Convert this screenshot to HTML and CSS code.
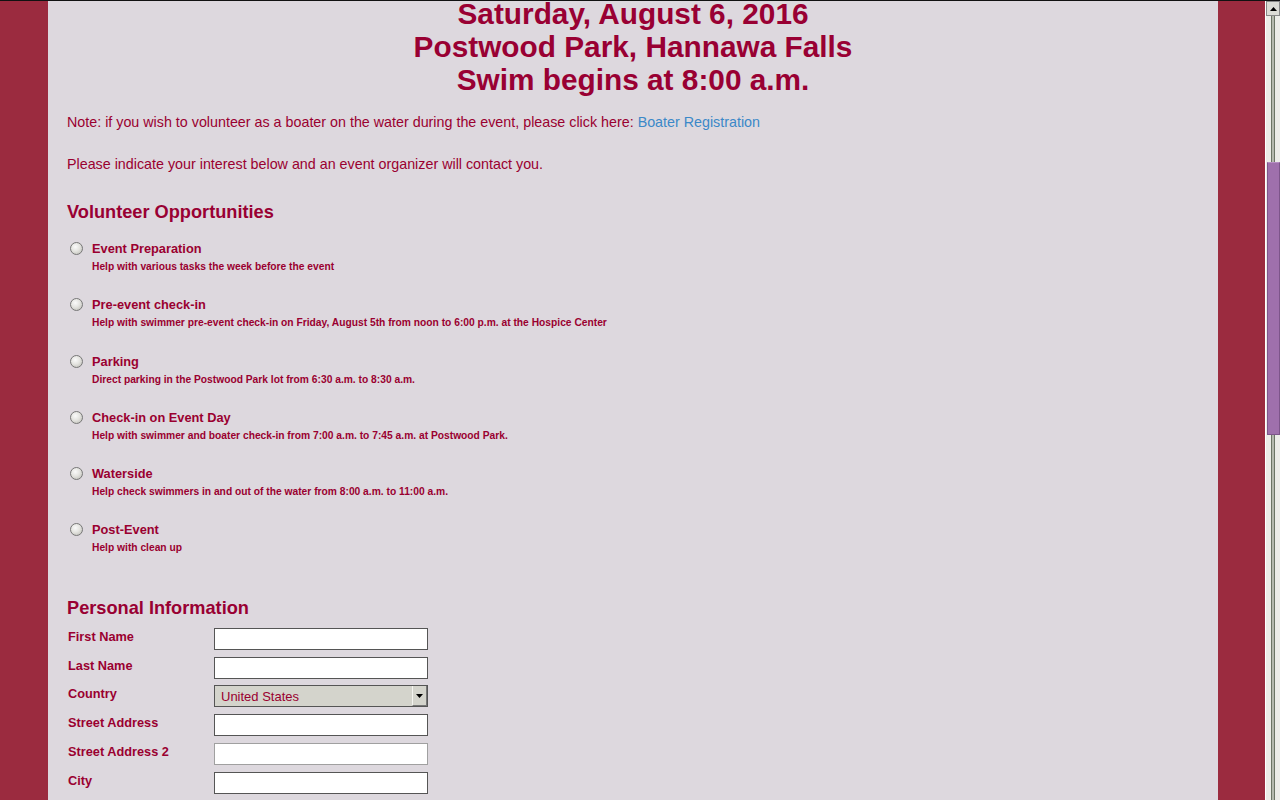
FILE: index.html
```html
<!DOCTYPE html>
<html>
<head>
<meta charset="utf-8">
<link rel="stylesheet" href="styles.css">
</head>
<body>
<div class="frame">
  <div class="page">
    <main class="content">
      <h1 class="title">Saturday, August 6, 2016<br>Postwood Park, Hannawa Falls<br>Swim begins at 8:00 a.m.</h1>
      <p class="para">Note: if you wish to volunteer as a boater on the water during the event, please click here: <a class="link" href="#">Boater Registration</a></p>
      <p class="para">Please indicate your interest below and an event organizer will contact you.</p>
      <h2 class="section">Volunteer Opportunities</h2>
      <ul class="opts">
        <li class="opt"><span class="radio"></span><div><div class="opt-name">Event Preparation</div><div class="opt-desc">Help with various tasks the week before the event</div></div></li>
        <li class="opt"><span class="radio"></span><div><div class="opt-name">Pre-event check-in</div><div class="opt-desc">Help with swimmer pre-event check-in on Friday, August 5th from noon to 6:00 p.m. at the Hospice Center</div></div></li>
        <li class="opt"><span class="radio"></span><div><div class="opt-name">Parking</div><div class="opt-desc">Direct parking in the Postwood Park lot from 6:30 a.m. to 8:30 a.m.</div></div></li>
        <li class="opt"><span class="radio"></span><div><div class="opt-name">Check-in on Event Day</div><div class="opt-desc">Help with swimmer and boater check-in from 7:00 a.m. to 7:45 a.m. at Postwood Park.</div></div></li>
        <li class="opt"><span class="radio"></span><div><div class="opt-name">Waterside</div><div class="opt-desc">Help check swimmers in and out of the water from 8:00 a.m. to 11:00 a.m.</div></div></li>
        <li class="opt"><span class="radio"></span><div><div class="opt-name">Post-Event</div><div class="opt-desc">Help with clean up</div></div></li>
      </ul>
      <h2 class="section section-pi">Personal Information</h2>
      <div class="form">
        <div class="row"><span class="lbl">First Name</span><span class="field"></span></div>
        <div class="row"><span class="lbl">Last Name</span><span class="field"></span></div>
        <div class="row"><span class="lbl">Country</span><span class="field select"><span class="sel-text">United States</span><span class="sel-btn"><svg width="7" height="4" viewBox="0 0 7 4"><path d="M0 0H7L3.5 4Z" fill="#000"/></svg></span></span></div>
        <div class="row"><span class="lbl">Street Address</span><span class="field"></span></div>
        <div class="row"><span class="lbl">Street Address 2</span><span class="field light"></span></div>
        <div class="row"><span class="lbl">City</span><span class="field"></span></div>
      </div>
    </main>
  </div>
  <div class="scrollbar">
    <div class="sb-btn"><svg width="7" height="4" viewBox="0 0 7 4"><path d="M0 4H7L3.5 0Z" fill="#000"/></svg></div>
    <div class="sb-track">
      <div class="sb-groove g1"></div>
      <div class="sb-thumb"></div>
      <div class="sb-groove g2"></div>
    </div>
  </div>
</div>
</body>
</html>
```

FILE: styles.css
```css
html, body {
  margin: 0;
  padding: 0;
  height: 100%;
  overflow: hidden;
}
body {
  font-family: "Liberation Sans", Arial, sans-serif;
  color: #9a0030;
  background: #9b2b3f;
}
.frame {
  display: flex;
  height: 800px;
  border-top: 1px solid #111;
  box-sizing: border-box;
}
.page {
  flex: 1;
  background: #9b2b3f;
  padding-left: 48px;
  padding-right: 47px;
  overflow: hidden;
}
.content {
  display: flow-root;
  background: #ddd8de;
  height: 100%;
  padding: 0 19px;
  box-sizing: border-box;
}
.title {
  margin: -4px 0 0;
  text-align: center;
  font-size: 29.8px;
  line-height: 33px;
  font-weight: bold;
  color: #990033;
}
.para {
  margin: 18px 0 0;
  font-size: 14.3px;
  line-height: 16px;
}
.para + .para {
  margin-top: 26px;
}
.link {
  color: #3b88c8;
  text-decoration: none;
}
.section {
  margin: 29px 0 0;
  font-size: 18.2px;
  line-height: 22px;
  font-weight: bold;
  color: #990033;
}
.opts {
  list-style: none;
  margin: 18px 0 0;
  padding: 0;
}
.opt {
  display: flex;
  align-items: flex-start;
  height: 56.3px;
}
.radio {
  width: 11px;
  height: 11px;
  border-radius: 50%;
  border: 1px solid #777;
  background: radial-gradient(circle at 40% 35%, #fafafa 0%, #e4e4e0 45%, #b8b8b0 100%);
  margin: 1px 9px 0 3px;
  flex: none;
}
.opt-name {
  font-size: 12.8px;
  line-height: 16px;
  font-weight: bold;
}
.opt-desc {
  font-size: 10.25px;
  line-height: 12px;
  font-weight: bold;
  margin-top: 4px;
}
.section-pi {
  margin-top: 18px;
}
.form {
  margin-top: 9px;
}
.row {
  display: flex;
  align-items: flex-start;
  height: 28.8px;
}
.lbl {
  width: 146px;
  padding-left: 1px;
  margin-top: 1px;
  font-size: 12.75px;
  line-height: 16px;
  font-weight: bold;
}
.field {
  width: 214px;
  height: 22px;
  box-sizing: border-box;
  border: 1px solid #555;
  background: #fff;
}
.field.light {
  border-color: #a0a0a0;
}
.select {
  display: flex;
  background: #d4d4cc;
  border-color: #555;
}
.sel-text {
  flex: 1;
  font-size: 13px;
  line-height: 22px;
  padding-left: 6px;
  color: #9a0030;
}
.sel-btn {
  width: 13px;
  display: flex;
  align-items: center;
  justify-content: center;
  background: #d4d4cc;
  border-left: 1px solid #f4f4f0;
  border-right: 1px solid #777;
  border-bottom: 1px solid #777;
}
.scrollbar {
  width: 15px;
  background: #ecece8;
  display: flex;
  flex-direction: column;
  border-left: 1px solid #fff;
  box-sizing: border-box;
}
.sb-btn {
  height: 15px;
  box-sizing: border-box;
  border: 1px solid #888;
  background: #dcdcd6;
  display: flex;
  align-items: center;
  justify-content: center;
}
.sb-track {
  flex: 1;
  display: flex;
  flex-direction: column;
  align-items: center;
}
.sb-groove {
  width: 4px;
  box-sizing: border-box;
  border-left: 1px solid #6d7566;
  border-right: 1px solid #6d7566;
  background: #b5b9ae;
}
.g1 { height: 146px; }
.g2 { flex: 1; }
.sb-thumb {
  width: 13px;
  height: 273px;
  box-sizing: border-box;
  background: #9f70ac;
  border: 1px solid #7d558a;
  border-top-color: #b890c4;
}
```
